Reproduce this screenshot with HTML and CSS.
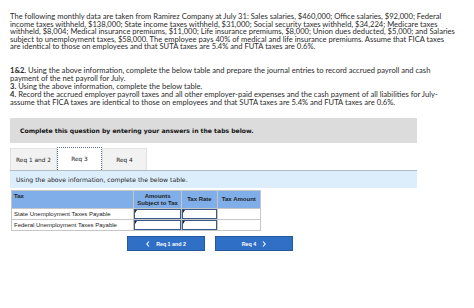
FILE: index.html
```html
<!DOCTYPE html>
<html lang="en">
<head>
    <meta charset="UTF-8">
    <meta name="viewport" content="width=device-width, initial-scale=1.0">
    <title>Payroll Taxes</title>
    <link rel="stylesheet" href="styles.css">
</head>
<body>

    <div class="page">
        <p class="intro">The following monthly data are taken from Ramirez Company at July 31: Sales salaries, $460,000; Office salaries, $92,000; Federal income taxes withheld, $138,000; State income taxes withheld, $31,000; Social security taxes withheld, $34,224; Medicare taxes withheld, $8,004; Medical insurance premiums, $11,000; Life insurance premiums, $8,000; Union dues deducted, $5,000; and Salaries subject to unemployment taxes, $58,000. The employee pays 40% of medical and life insurance premiums. Assume that FICA taxes are identical to those on employees and that SUTA taxes are 5.4% and FUTA taxes are 0.6%.</p>

        <p class="reqs"><b>1&amp;2.</b> Using the above information, complete the below table and prepare the journal entries to record accrued payroll and cash payment of the net payroll for July.<br>
        <b>3.</b> Using the above information, complete the below table.<br>
        <b>4.</b> Record the accrued employer payroll taxes and all other employer-paid expenses and the cash payment of all liabilities for July- assume that FICA taxes are identical to those on employees and that SUTA taxes are 5.4% and FUTA taxes are 0.6%.</p>

        <div class="question">
            <div class="banner">Complete this question by entering your answers in the tabs below.</div>

            <div class="tabs">
                <span class="tab tab-wide">Req 1 and 2</span>
                <span class="tab active">Req 3</span>
                <span class="tab">Req 4</span>
            </div>

            <div class="prompt">Using the above information, complete the below table.</div>

            <table class="tax-table">
                <thead>
                    <tr>
                        <th class="col-tax">Tax</th>
                        <th class="col-amt">Amounts<br>Subject to Tax</th>
                        <th class="col-rate">Tax Rate</th>
                        <th class="col-total">Tax Amount</th>
                    </tr>
                </thead>
                <tbody>
                    <tr>
                        <td>State Unemployment Taxes Payable</td>
                        <td class="entry"><input type="text"></td>
                        <td class="entry"><input type="text"></td>
                        <td></td>
                    </tr>
                    <tr>
                        <td>Federal Unemployment Taxes Payable</td>
                        <td class="entry"><input type="text"></td>
                        <td class="entry"><input type="text"></td>
                        <td></td>
                    </tr>
                </tbody>
            </table>

            <div class="nav">
                <button class="nav-btn">
                    <svg width="4" height="6" viewBox="0 0 4 6"><polyline points="3,0.5 0.8,3 3,5.5" fill="none" stroke="#fff" stroke-width="1.1"/></svg>
                    <span>Req 1 and 2</span>
                </button>
                <button class="nav-btn">
                    <span>Req 4</span>
                    <svg width="4" height="6" viewBox="0 0 4 6"><polyline points="1,0.5 3.2,3 1,5.5" fill="none" stroke="#fff" stroke-width="1.1"/></svg>
                </button>
            </div>
        </div>
    </div>

</body>
</html>
```

FILE: styles.css
```css
body {
    margin: 0;
    padding: 0;
    background-color: #fff;
}

.page {
    padding: 13px 0 0 10px;
    color: #2b2b2b;
    font-family: Lato, "Open Sans", sans-serif;
    font-size: 7.6px;
}

p {
    width: 446px;
    margin: 0;
}

.intro {
    line-height: 7.5px;
    margin-bottom: 16.5px;
}

.reqs {
    line-height: 7.9px;
    margin-bottom: 11.5px;
}

.question {
    width: 407px;
}

.banner {
    height: 25px;
    padding-left: 10px;
    display: flex;
    align-items: center;
    background-color: #dcdcdc;
    color: #111;
    font-family: "DejaVu Sans", sans-serif;
    font-weight: bold;
    font-size: 6.1px;
}

.tabs {
    display: flex;
    align-items: flex-end;
    height: 23px;
    margin-top: 4px;
}

.tab {
    box-sizing: border-box;
    width: 45px;
    height: 22px;
    display: flex;
    align-items: center;
    justify-content: center;
    background-color: #f2f2f2;
    border: 1px solid #e2e2e2;
    border-bottom: none;
    color: #222;
    font-family: "DejaVu Sans", sans-serif;
    font-size: 5.8px;
}

.tab-wide {
    width: 47px;
}

.tab.active {
    height: 23px;
    background-color: #fff;
    border: 1px dotted #5b6f96;
    border-bottom: none;
}

.prompt {
    height: 17px;
    padding-left: 6px;
    display: flex;
    align-items: center;
    background-color: #dcedfb;
    border-top: 1px solid #b3bac2;
    color: #222;
    font-family: "DejaVu Sans", sans-serif;
    font-size: 6.15px;
}

.tax-table {
    width: 250px;
    margin: 2px 0 0 1px;
    border-collapse: collapse;
    font-family: "Liberation Sans", Arial, sans-serif;
    font-size: 6px;
    line-height: 7px;
    color: #222;
}

.tax-table th,
.tax-table td {
    border: 1px solid #c6c6c6;
    padding: 0 2px;
}

.tax-table th {
    height: 15px;
    background-color: #7faee9;
    font-weight: bold;
    text-align: center;
}

.tax-table th.col-tax {
    text-align: left;
    vertical-align: top;
    padding-top: 2px;
}

.col-tax { width: 120px; }
.col-amt { width: 44px; }
.col-rate { width: 31px; }
.col-total { width: 39px; }

.tax-table td {
    height: 10px;
}

.tax-table td.entry {
    position: relative;
    padding: 0;
}

.entry input {
    box-sizing: border-box;
    display: block;
    width: 100%;
    height: 10px;
    margin: 0;
    border: 1px solid #3a5a8c;
    background: #fff;
}

.entry::before {
    content: "";
    position: absolute;
    left: 1px;
    top: 1px;
    border-top: 3px solid #222;
    border-right: 2px solid transparent;
}

.nav {
    width: 400px;
    margin-top: 5px;
    display: flex;
    justify-content: center;
    gap: 10px;
}

.nav-btn {
    box-sizing: border-box;
    width: 78px;
    height: 15px;
    padding: 0;
    display: flex;
    align-items: center;
    justify-content: center;
    gap: 6px;
    background-color: #2f6fc5;
    border: 1px solid #25589c;
    color: #fff;
    font-family: "Liberation Sans", Arial, sans-serif;
    font-weight: bold;
    font-size: 5.3px;
    cursor: pointer;
}
```
